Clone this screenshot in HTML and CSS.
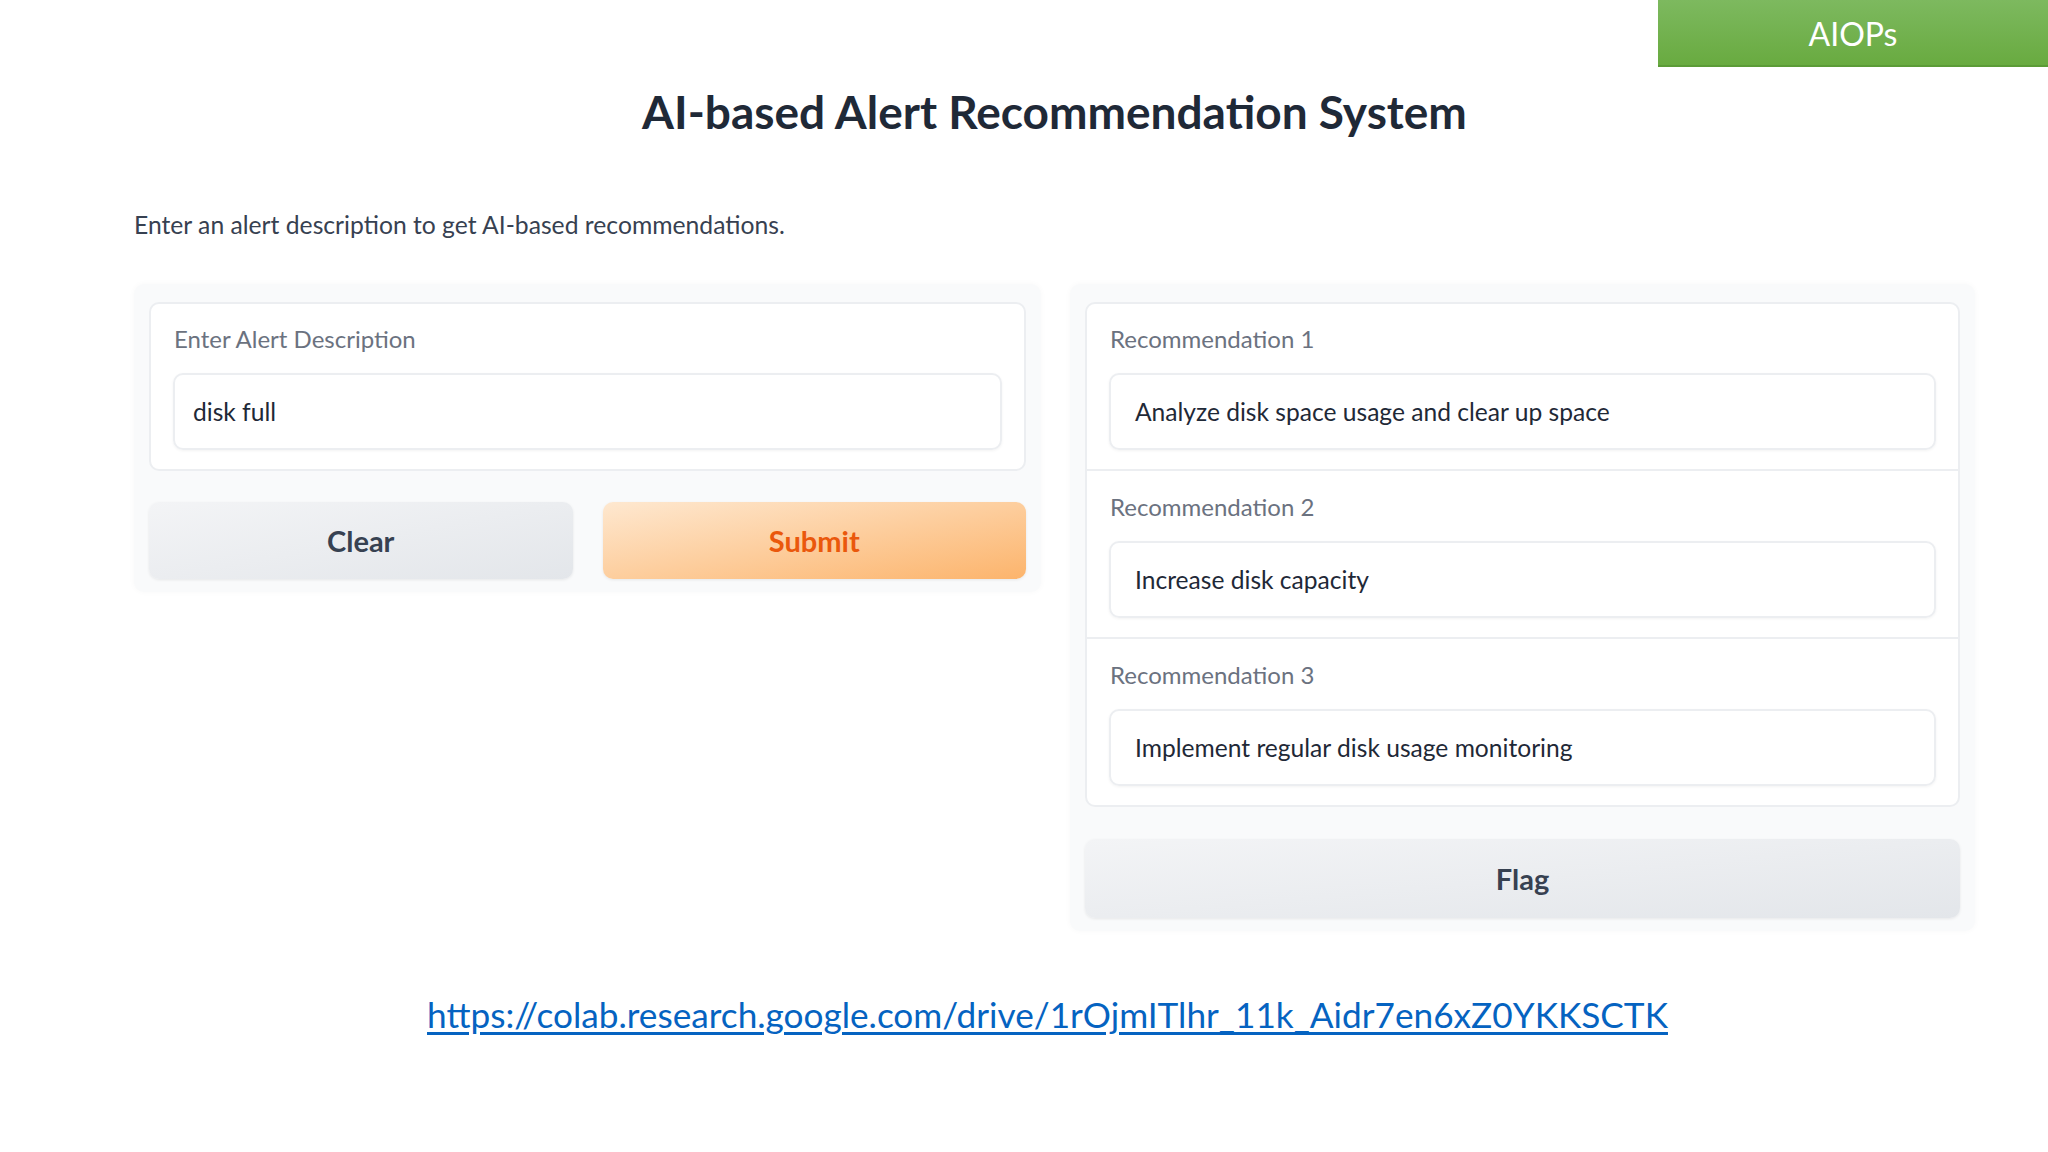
FILE: index.html
```html
<!DOCTYPE html>
<html lang="en">
<head>
<meta charset="utf-8">
<title>AI-based Alert Recommendation System</title>
<link rel="stylesheet" href="styles.css">
</head>
<body>
<div class="slide">
  <div class="topbar">
    <div class="badge">AIOPs</div>
  </div>
  <div class="content">
    <h1 class="title">AI-based Alert Recommendation System</h1>
    <p class="subtitle">Enter an alert description to get AI-based recommendations.</p>
    <div class="columns">
      <div class="panel">
        <div class="card">
          <div class="field field-input">
            <div class="label">Enter Alert Description</div>
            <div class="box">disk full</div>
          </div>
        </div>
        <div class="actions">
          <button class="btn btn-secondary">Clear</button>
          <button class="btn btn-primary">Submit</button>
        </div>
      </div>
      <div class="panel">
        <div class="card">
          <div class="field">
            <div class="label">Recommendation 1</div>
            <div class="box">Analyze disk space usage and clear up space</div>
          </div>
          <div class="field field-sep">
            <div class="label">Recommendation 2</div>
            <div class="box">Increase disk capacity</div>
          </div>
          <div class="field field-sep">
            <div class="label">Recommendation 3</div>
            <div class="box">Implement regular disk usage monitoring</div>
          </div>
        </div>
        <div class="actions actions-single">
          <button class="btn btn-secondary">Flag</button>
        </div>
      </div>
    </div>
    <div class="linkrow">
      <a class="link" href="#">https://colab.research.google.com/drive/1rOjmITlhr_11k_Aidr7en6xZ0YKKSCTK</a>
    </div>
  </div>
</div>
</body>
</html>
```
FILE: styles.css
```css
* { box-sizing: border-box; }
html, body { margin: 0; padding: 0; background: #ffffff; }
body { width: 2048px; height: 1152px; overflow: hidden; font-family: "Lato", "Noto Sans", sans-serif; }

.slide { width: 2048px; height: 1152px; }

.topbar { height: 67px; display: flex; justify-content: flex-end; }
.badge {
  width: 390px; height: 67px;
  display: flex; align-items: center; justify-content: center;
  background: linear-gradient(#7db95f, #68aa3f);
  box-shadow: inset 0 -2px 0 rgba(70,130,40,0.35);
  color: #ffffff; font-family: "Lato", sans-serif; font-size: 32px; font-weight: 400;
}

.content { margin-left: 134px; width: 1841px; }

.title {
  margin: 17px 0 0; text-align: center;
  font-size: 46px; line-height: 55px; font-weight: 700; color: #1f2937;
}
.subtitle {
  margin: 71px 0 0; font-size: 24.7px; line-height: 30px; color: #374151;
}

.columns {
  margin-top: 44px;
  display: grid; grid-template-columns: 907px 905px; column-gap: 29px; align-items: start;
}
.panel {
  background: #f9fafb; border-radius: 10px;
  padding: 18px 15px 13px 15px;
  box-shadow: 0 0 6px rgba(0,0,0,0.03);
}
.card {
  background: #ffffff; border: 2px solid #eceef1; border-radius: 10px;
  display: flex; flex-direction: column;
}
.field { height: 165px; padding: 20px 22px 0 22px; display: flex; flex-direction: column; }
.field-sep { height: 168px; padding-top: 21px; border-top: 2px solid #eceef1; }
.label { font-size: 24px; line-height: 30px; color: #6b7280; margin-left: 1px; }
.box {
  margin-top: 19px; height: 77px;
  border: 2px solid #eceef1; border-radius: 10px;
  box-shadow: 0 1px 3px rgba(0,0,0,0.05);
  display: flex; align-items: center; padding-left: 24px;
  font-size: 24.6px; color: #1f2937;
}
.field-input .box { padding-left: 18px; }

.actions { margin-top: 31px; display: grid; grid-template-columns: 1fr 1fr; column-gap: 30px; }
.actions-single { margin-top: 32px; grid-template-columns: 1fr; }
.btn {
  height: 77px; border: none; border-radius: 10px;
  font-family: "Lato", sans-serif; font-size: 29px; font-weight: 700;
  box-shadow: 0 1px 3px rgba(0,0,0,0.08);
}
.actions-single .btn { height: 79px; }
.btn-secondary { background: linear-gradient(to bottom right, #f3f4f6, #e3e6ea); color: #374151; }
.btn-primary { background: linear-gradient(to bottom right, #fee8d0, #fcb46c); color: #ea580c; }

.linkrow { margin-top: 61px; text-align: center; padding-right: 14px; }
.link {
  font-family: "Lato", sans-serif; font-size: 35.2px; line-height: 44px;
  color: #0563c1; text-decoration: underline; text-underline-offset: 4px;
}
```
